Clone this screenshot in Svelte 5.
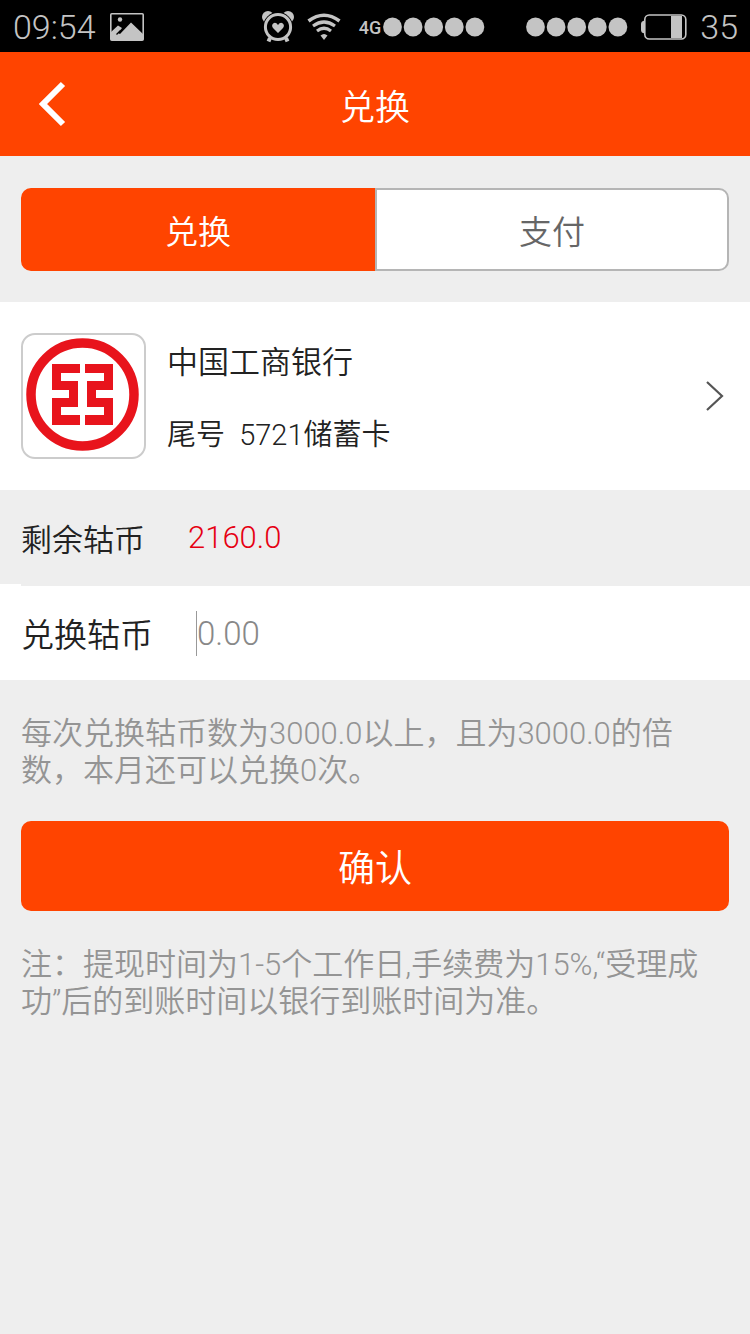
<script>
  const dots = [0, 1, 2, 3, 4];
  const modes = ["兑换", "支付"];
  let mode = "兑换";
  let amount = "";
  const bank = {
    name: "中国工商银行",
    tail: "5721",
    type: "储蓄卡",
  };
  const balance = "2160.0";
  const step = "3000.0";
</script>

<div class="status">
  <span class="digits">09:54</span>
  <svg class="picture" width="34" height="28" viewBox="0 0 34 28">
    <rect x="0.8" y="0.8" width="32.4" height="26.4" rx="1" fill="none" stroke="#c4c4c4" stroke-width="1.6" />
    <circle cx="10" cy="6.5" r="2.2" fill="#c4c4c4" />
    <path d="M1 27V19L8 12.5L12 15L8 20L10 21L21 9.5L33 21V27Z" fill="#c4c4c4" />
    <path d="M6.5 21.5L10.5 17.5" stroke="#000" stroke-width="1.2" />
  </svg>
  <div class="signals">
    <svg width="32" height="32" viewBox="0 0 32 32">
      <circle cx="6" cy="6" r="6" fill="#c4c4c4" />
      <circle cx="26" cy="6" r="6" fill="#c4c4c4" />
      <circle cx="16" cy="16" r="15" fill="#000" />
      <path d="M8 27L6.5 30.5M24 27L25.5 30.5" stroke="#c4c4c4" stroke-width="4" />
      <circle cx="16" cy="16" r="12.6" fill="#000" stroke="#c4c4c4" stroke-width="3" />
      <path d="M16 22L11 17Q9 14 11.5 12.2Q14 11 16 14Q18 11 20.5 12.2Q23 14 21 17Z" fill="#c4c4c4" />
    </svg>
    <svg class="wifi" width="34" height="28" viewBox="0 0 34 28" fill="none" stroke="#c4c4c4">
      <path d="M1.5 8Q17 -3.5 32.5 8" stroke-width="3.6" />
      <path d="M6 13Q17 5 28 13" stroke-width="3.2" />
      <path d="M10 18Q17 12.5 24 18" stroke-width="3.2" />
      <path d="M13.5 22.5Q17 19.5 20.5 22.5L17 27Z" fill="#c4c4c4" stroke="none" />
    </svg>
    <span class="network">4G</span>
    <svg class="carrier" width="102" height="20" viewBox="0 0 102 20" fill="#c4c4c4">
      {#each dots as i}
        <circle cx={9.5 + i * 20.6} cy="10" r="9.4" />
      {/each}
    </svg>
    <svg class="carrier second" width="102" height="20" viewBox="0 0 102 20" fill="#c4c4c4">
      {#each dots as i}
        <circle cx={9.5 + i * 20.6} cy="10" r="9.4" />
      {/each}
    </svg>
    <svg class="battery" width="46" height="26" viewBox="0 0 46 26">
      <rect x="3.8" y="1" width="41" height="24" rx="4.5" fill="none" stroke="#c4c4c4" stroke-width="1.6" />
      <path d="M3.5 6.5Q0 7 0 10V16Q0 19 3.5 19.5Z" fill="#c4c4c4" />
      <rect x="30" y="2" width="11" height="22" fill="#c4c4c4" />
    </svg>
    <span class="digits">35</span>
  </div>
</div>

<header>
  <button class="back" aria-label="返回">
    <svg width="28" height="46" viewBox="0 0 28 46">
      <path d="M24 3L4 23L24 43" fill="none" stroke="#fff" stroke-width="6" />
    </svg>
  </button>
  <h1>兑换</h1>
</header>

<main>
  <div class="tabs">
    {#each modes as m}
      <button class:active={mode === m} on:click={() => (mode = m)}>{m}</button>
    {/each}
  </div>

  <a class="bank" href="#bank">
    <span class="logo">
      <svg width="113" height="113" viewBox="0 0 113 113" fill="#e8141c">
        <circle cx="56.5" cy="56.5" r="51.5" fill="none" stroke="#e8141c" stroke-width="9.5" />
        <path d="M26 26H54V35H35V43H52V69H35V77H54V87H26V60H43V52H26Z" />
        <path d="M59 26H87V52H70V60H87V87H59V77H78V69H61V43H78V35H59Z" />
      </svg>
    </span>
    <span class="info">
      <span>{bank.name}</span>
      <span class="card">尾号&nbsp; {bank.tail}{bank.type}</span>
    </span>
    <svg width="20" height="32" viewBox="0 0 20 32">
      <path d="M2 2L17 16L2 30" fill="none" stroke="#555" stroke-width="2.2" />
    </svg>
  </a>

  <div class="row balance">
    <span>剩余轱币</span>
    <span class="value">{balance}</span>
  </div>
  <div class="row amount">
    <label for="amount">兑换轱币</label>
    <input id="amount" type="text" placeholder="0.00" bind:value={amount} />
  </div>

  <p>每次兑换轱币数为{step}以上，且为{step}的倍数，本月还可以兑换0次。</p>
  <button class="confirm">确认</button>
  <p>注：提现时间为1-5个工作日,手续费为15%,“受理成功”后的到账时间以银行到账时间为准。</p>
</main>

<style>
:global(body) {
  background: #eee;
  font-family: Roboto, "Noto Sans CJK SC", sans-serif;
  font-weight: 350;
}
button, input {
  font: inherit;
  padding: 0;
  border: 0;
  border-radius: 0;
}
svg {
  display: block;
  flex: none;
}
.status {
  display: flex;
  align-items: center;
  box-sizing: border-box;
  height: 52px;
  padding: 2px 12px 0 13px;
  background: #000;
  color: #c4c4c4;
  font-weight: 300;
}
.digits {
  font-size: 34px;
  line-height: 50px;
}
.picture {
  margin-left: 14px;
}
.signals {
  display: flex;
  align-items: center;
  margin-left: auto;
}
.wifi {
  margin-left: 13px;
}
.network {
  margin-left: 18px;
  font-size: 18px;
  font-weight: 500;
}
.carrier {
  margin-left: 2px;
}
.second {
  margin-left: 41px;
}
.battery {
  margin: 0 13px;
}
header {
  display: grid;
  grid-template-columns: 104px 1fr 104px;
  align-items: center;
  height: 104px;
  background: #ff4400;
  color: #fff;
}
.back {
  display: flex;
  align-items: center;
  height: 104px;
  padding-left: 39px;
  background: none;
}
h1 {
  margin: 0;
  font-size: 35px;
  font-weight: inherit;
  text-align: center;
}
.tabs {
  display: flex;
  padding: 32px 21px 31px;
}
.tabs button {
  flex: 1;
  height: 83px;
  border: 2px solid #b5b5b5;
  background: #fff;
  color: #666;
  font-size: 33px;
}
.tabs button:first-child {
  border-radius: 10px 0 0 10px;
}
.tabs button:last-child {
  border-radius: 0 10px 10px 0;
}
.tabs .active {
  border-color: #ff4400;
  background: #ff4400;
  color: #fff;
}
.bank {
  display: flex;
  align-items: center;
  gap: 21px;
  padding: 31px 25px 31px 21px;
  background: #fff;
  color: #222;
  font-size: 31px;
  text-decoration: none;
}
.logo {
  display: flex;
  box-sizing: border-box;
  width: 125px;
  height: 126px;
  padding: 3px;
  border: 2px solid #ccc;
  border-radius: 14px;
}
.info {
  display: flex;
  flex: 1;
  flex-direction: column;
  gap: 32px;
  padding-top: 6px;
  line-height: 40px;
}
.card {
  font-size: 29px;
}
.row {
  display: flex;
  align-items: center;
  height: 94px;
  padding: 0 21px;
  gap: 43px;
  color: #222;
  font-size: 31px;
}
.value {
  color: #e60012;
}
.amount {
  padding-top: 2px;
  background: linear-gradient(#eee, #eee) 21px 0 / 100% 2px no-repeat #fff;
  font-size: 33px;
}
.amount input {
  flex: 1;
  min-width: 0;
  height: 45px;
  border-left: 1px solid #999;
  outline: none;
  background: none;
}
.amount input::placeholder {
  color: #888;
  opacity: 1;
}
p {
  margin: 0;
  padding: 35px 21px 32px;
  color: #949494;
  font-size: 31px;
  line-height: 37px;
}
.confirm {
  display: block;
  width: calc(100% - 42px);
  height: 90px;
  margin: 0 21px;
  border-radius: 10px;
  background: #ff4400;
  color: #fff;
  font-size: 37px;
}
</style>
